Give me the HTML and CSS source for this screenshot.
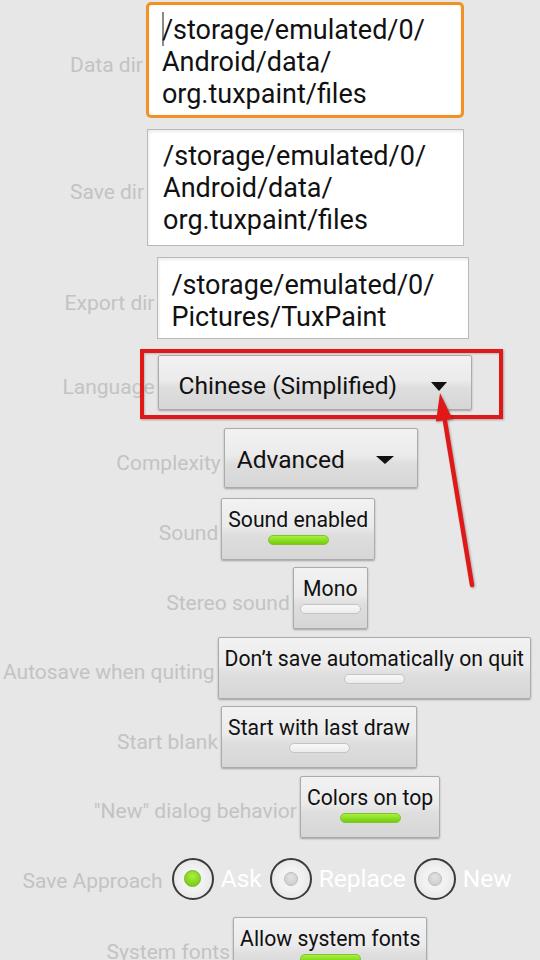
FILE: index.html
```html
<!DOCTYPE html>
<html lang="en">
<head>
    <meta charset="UTF-8">
    <meta name="viewport" content="width=device-width, initial-scale=1.0">
    <title>Tux Paint Settings</title>
    <link rel="stylesheet" href="styles.css">
</head>
<body>
    <div class="settings">
        <div class="row row-path">
            <span class="label">Data dir</span>
            <div class="path-field path-focused"><span class="caret"></span>/storage/emulated/0/<br>Android/data/<br>org.tuxpaint/files</div>
        </div>

        <div class="row row-path">
            <span class="label">Save dir</span>
            <div class="path-field path-save">/storage/emulated/0/<br>Android/data/<br>org.tuxpaint/files</div>
        </div>

        <div class="row row-path">
            <span class="label">Export dir</span>
            <div class="path-field path-export">/storage/emulated/0/<br>Pictures/TuxPaint</div>
        </div>

        <div class="row row-spinner">
            <span class="label">Language</span>
            <div class="button spinner spinner-wide">
                <span>Chinese (Simplified)</span>
                <svg class="spinner-arrow" width="16" height="9" viewBox="0 0 16 9"><path d="M0 0H16L8 9Z" fill="#111"/></svg>
            </div>
        </div>

        <div class="row row-spinner">
            <span class="label">Complexity</span>
            <div class="button spinner">
                <span>Advanced</span>
                <svg class="spinner-arrow" width="18" height="8" viewBox="0 0 18 8"><path d="M0 0H18L9 8Z" fill="#111"/></svg>
            </div>
        </div>

        <div class="row row-toggle">
            <span class="label">Sound</span>
            <div class="button toggle">Sound enabled<span class="bar bar-on"></span></div>
        </div>

        <div class="row row-toggle">
            <span class="label">Stereo sound</span>
            <div class="button toggle">Mono<span class="bar"></span></div>
        </div>

        <div class="row row-toggle">
            <span class="label">Autosave when quiting</span>
            <div class="button toggle">Don’t save automatically on quit<span class="bar"></span></div>
        </div>

        <div class="row row-toggle">
            <span class="label">Start blank</span>
            <div class="button toggle">Start with last draw<span class="bar"></span></div>
        </div>

        <div class="row row-toggle">
            <span class="label">"New" dialog behavior</span>
            <div class="button toggle">Colors on top<span class="bar bar-on"></span></div>
        </div>

        <div class="row row-radio">
            <span class="label">Save Approach</span>
            <div class="radio-group">
                <div class="radio"><span class="radio-circle"><span class="radio-dot radio-dot-on"></span></span>Ask</div>
                <div class="radio"><span class="radio-circle"><span class="radio-dot"></span></span>Replace</div>
                <div class="radio"><span class="radio-circle"><span class="radio-dot"></span></span>New</div>
            </div>
        </div>

        <div class="row row-toggle row-fonts">
            <span class="label">System fonts</span>
            <div class="button toggle">Allow system fonts<span class="bar bar-on"></span></div>
        </div>

        <!-- annotation drawn over the screenshot -->
        <div class="mark-box"></div>
        <svg class="mark-arrow" width="70" height="210" viewBox="0 0 70 210">
            <path d="M24.3 32 L52 200" stroke="#e01818" stroke-width="4.5" stroke-linecap="round" fill="none"/>
            <path d="M20 8 L32.5 34 L16 36.5 Z" fill="#e01818"/>
        </svg>
    </div>
</body>
</html>
```

FILE: styles.css
```css
* {
    box-sizing: border-box;
}

body {
    margin: 0;
    height: 960px;
    overflow: hidden;
    background: #e7e7e7;
    font-family: Roboto, "Noto Sans", sans-serif;
    color: #111;
}

.settings {
    position: relative;
    display: flex;
    flex-direction: column;
    padding: 2px 6px 0 0;
}

.row {
    display: flex;
    justify-content: center;
    align-items: center;
    gap: 3px;
}

.label {
    color: #c3c3c3;
    font-size: 21px;
    line-height: 24px;
    margin-top: 9px;
    white-space: nowrap;
}

/* path text fields */
.row-path {
    margin-top: 11px;
}

.row-path:first-child {
    margin-top: 0;
}

.path-field {
    position: relative;
    background: #fff;
    border: 1px solid #bababa;
    font-size: 27px;
    line-height: 32px;
    white-space: nowrap;
    box-shadow: inset 1px 2px 3px rgba(0, 0, 0, 0.08);
}

.path-focused {
    width: 318px;
    padding: 9px 13px 5px;
    border: 3px solid #f29226;
    border-radius: 5px;
    box-shadow: inset 0 0 1px rgba(160, 80, 0, 0.4);
}

.path-save {
    width: 317px;
    padding: 10px 15px 9px;
}

.path-export {
    width: 312px;
    padding: 11px 13px 5px;
}

.caret {
    display: inline-block;
    width: 2px;
    height: 34px;
    margin: -2px -2px 0 0;
    vertical-align: top;
    background: #8a8a8a;
}

/* buttons */
.button {
    background: linear-gradient(to bottom, #f2f2f2 0%, #ebebeb 45%, #dedede 60%, #d6d6d6 100%);
    border: 1px solid #ababab;
    border-radius: 2px;
    box-shadow: 0 1px 2px rgba(0, 0, 0, 0.3);
    white-space: nowrap;
}

.row-spinner {
    margin: 16px 0 2px;
}

.spinner {
    display: flex;
    align-items: center;
    gap: 31px;
    height: 60px;
    padding: 4px 23px 0 12px;
    font-size: 24.5px;
    line-height: 28px;
}

.spinner-wide {
    width: 314px;
    height: 55px;
    padding: 7px 24px 0 20px;
    justify-content: space-between;
}

.spinner-arrow {
    flex: none;
}

.row-toggle {
    margin-top: 7.5px;
}

.toggle {
    display: flex;
    flex-direction: column;
    align-items: center;
    height: 62px;
    padding: 9px 6px 0;
    font-size: 21.2px;
    line-height: 24px;
}

.bar {
    width: 61px;
    height: 10px;
    margin-top: 3px;
    border-radius: 6px;
    background: linear-gradient(to bottom, #f8f8f8, #ececec);
    border: 1px solid #c4c4c4;
}

.bar-on {
    background: linear-gradient(to bottom, #a6f23c, #74cc0e);
    border-color: #84c230;
}

/* radio buttons */
.row-radio {
    margin-top: 20px;
    gap: 9px;
}

.row-radio .label {
    margin-top: 4px;
}

.radio-group {
    display: flex;
    gap: 8px;
}

.radio {
    display: flex;
    align-items: center;
    gap: 7px;
    color: #fff;
    font-size: 24.5px;
    line-height: 28px;
}

.radio-circle {
    display: flex;
    align-items: center;
    justify-content: center;
    width: 42px;
    height: 42px;
    border-radius: 50%;
    border: 2px solid #3b3b3b;
    background: radial-gradient(circle, #f2f2f2 40%, #e0e0e0 100%);
}

.radio-dot {
    width: 14px;
    height: 14px;
    border-radius: 50%;
    background: radial-gradient(circle at 50% 35%, #e2e2e2, #c8c8c8);
    border: 1px solid #bdbdbd;
}

.radio-dot-on {
    width: 17px;
    height: 17px;
    background: radial-gradient(circle at 50% 35%, #a8f040, #6cc40a);
    border-color: #78b828;
}

.row-fonts {
    margin-top: 17px;
}

/* red annotation */
.mark-box {
    position: absolute;
    left: 140px;
    top: 349px;
    width: 363px;
    height: 70px;
    border: 4px solid #e01818;
    box-shadow: 1px 1px 2px rgba(0, 0, 0, 0.3), inset 1px 1px 2px rgba(0, 0, 0, 0.2);
}

.mark-arrow {
    position: absolute;
    left: 420px;
    top: 385px;
    filter: drop-shadow(1px 1px 1px rgba(0, 0, 0, 0.3));
}
```
